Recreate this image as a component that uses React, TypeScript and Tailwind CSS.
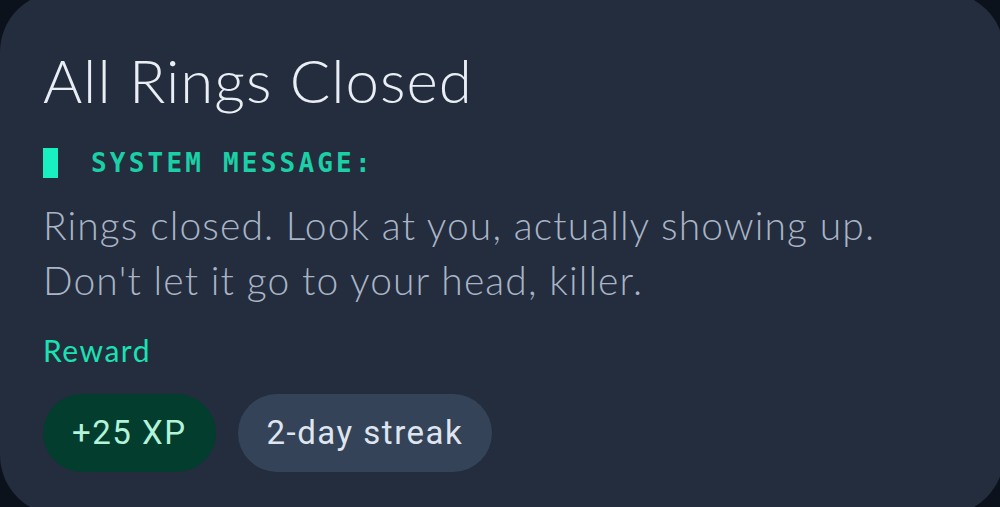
const pills = [
  { label: "+25 XP", className: "bg-[#023d2e] text-[#b2f3da]" },
  { label: "2-day streak", className: "bg-[#354358] text-[#dfe5ee]" },
];

export default function App() {
  return (
    <div className="h-[507px] w-[1000px] overflow-hidden bg-[#0c121b]">
      <div className="-mt-[8px] h-[523px] w-[1004px] rounded-[60px] bg-[#232d3d] pl-[43px] pt-[52px] font-['Lato',sans-serif]">
        <h1 className="text-[60px] font-light leading-[72px] tracking-[1px] text-[#e9edf4]">All Rings Closed</h1>

        <div className="mt-[32px] flex items-center gap-[33px]">
          <span className="block h-[30px] w-[15px] bg-[#18f0c2]" />
          <span className="font-['DejaVu_Sans_Mono',monospace] text-[26px] font-bold leading-[30px] tracking-[3.2px] text-[#1bcfa6]">
            SYSTEM MESSAGE:
          </span>
        </div>

        <p className="mt-[20px] text-[39px] font-light leading-[55px] tracking-[1.1px] text-[#a9b4c6]">
          Rings closed. Look at you, actually showing up.
          <br />
          Don't let it go to your head, killer.
        </p>

        <p className="mt-[24px] text-[30px] leading-[36px] tracking-[1.5px] text-[#19e2b3]">Reward</p>

        <div className="mt-[26px] flex gap-[22px]">
          {pills.map((pill) => (
            <span
              key={pill.label}
              className={`flex h-[78px] items-center rounded-full px-[29px] font-['Roboto',sans-serif] text-[33px] tracking-[1.5px] ${pill.className}`}
            >
              {pill.label}
            </span>
          ))}
        </div>
      </div>
    </div>
  );
}
